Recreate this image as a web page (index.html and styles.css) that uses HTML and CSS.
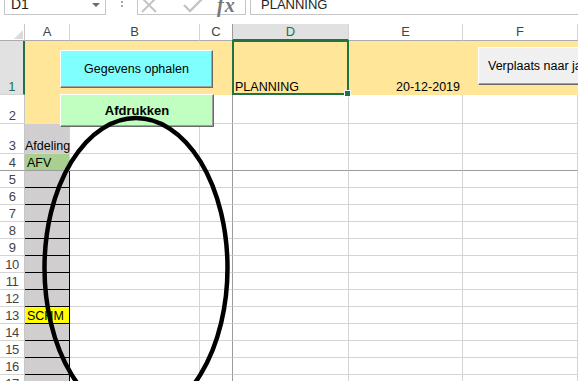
FILE: index.html
```html
<!DOCTYPE html>
<html lang="nl">
<head>
  <meta charset="UTF-8" />
  <title>Planning</title>
  <link rel="stylesheet" href="styles.css">
</head>
<body>

  <div class="formula-bar">
    <div class="name-box">D1<span class="arrow"></span></div>
    <div class="grip"><span></span></div>
    <div class="fx-box">
      <svg class="ico-x" width="20" height="16" viewBox="0 0 20 16">
        <path d="M2 1 L16 15 M16 1 L2 15" stroke="#c4c4c4" stroke-width="2" fill="none"/>
      </svg>
      <svg class="ico-ok" width="20" height="16" viewBox="0 0 20 16">
        <path d="M1 8 L7 14 L19 2" stroke="#c4c4c4" stroke-width="2.4" fill="none"/>
      </svg>
      <span class="ico-fx">fx</span>
    </div>
    <div class="formula">PLANNING</div>
  </div>

  <div class="sheet">
    <div class="row hdr">
      <div class="corner"><span></span></div>
      <div>A</div><div>B</div><div class="fz">C</div><div class="on">D</div><div>E</div><div>F</div>
    </div>
    <div class="row r1">
      <div class="rh on">1</div>
      <div class="y"></div><div class="y"></div><div class="y fz"></div>
      <div class="y">PLANNING</div><div class="y right">20-12-2019</div><div class="y"></div>
    </div>
    <div class="row r2">
      <div class="rh">2</div>
      <div class="y"></div><div class="y"></div><div class="fz"></div><div></div><div></div><div></div>
    </div>
    <div class="row r3">
      <div class="rh">3</div>
      <div class="g tight">Afdeling</div><div></div><div class="fz"></div><div></div><div></div><div></div>
    </div>
    <div class="row frz">
      <div class="rh">4</div>
      <div class="green">AFV</div><div></div><div class="fz"></div><div></div><div></div><div></div>
    </div>
    <div class="row"><div class="rh">5</div><div class="g box"></div><div></div><div class="fz"></div><div></div><div></div><div></div></div>
    <div class="row"><div class="rh">6</div><div class="g box"></div><div></div><div class="fz"></div><div></div><div></div><div></div></div>
    <div class="row"><div class="rh">7</div><div class="g box"></div><div></div><div class="fz"></div><div></div><div></div><div></div></div>
    <div class="row"><div class="rh">8</div><div class="g box"></div><div></div><div class="fz"></div><div></div><div></div><div></div></div>
    <div class="row"><div class="rh">9</div><div class="g box"></div><div></div><div class="fz"></div><div></div><div></div><div></div></div>
    <div class="row"><div class="rh">10</div><div class="g box"></div><div></div><div class="fz"></div><div></div><div></div><div></div></div>
    <div class="row"><div class="rh">11</div><div class="g box"></div><div></div><div class="fz"></div><div></div><div></div><div></div></div>
    <div class="row"><div class="rh">12</div><div class="g box"></div><div></div><div class="fz"></div><div></div><div></div><div></div></div>
    <div class="row"><div class="rh">13</div><div class="yel box">SCHM</div><div></div><div class="fz"></div><div></div><div></div><div></div></div>
    <div class="row"><div class="rh">14</div><div class="g box"></div><div></div><div class="fz"></div><div></div><div></div><div></div></div>
    <div class="row"><div class="rh">15</div><div class="g box"></div><div></div><div class="fz"></div><div></div><div></div><div></div></div>
    <div class="row"><div class="rh">16</div><div class="g box"></div><div></div><div class="fz"></div><div></div><div></div><div></div></div>
    <div class="row"><div class="rh">17</div><div class="g box"></div><div></div><div class="fz"></div><div></div><div></div><div></div></div>
  </div>

  <div class="sel"></div>

  <div class="btn btn-fetch">Gegevens ophalen</div>
  <div class="btn btn-print">Afdrukken</div>
  <div class="btn btn-move">Verplaats naar jaar</div>

  <svg class="lasso" width="578" height="381" viewBox="0 0 578 381">
    <ellipse cx="136" cy="268" rx="91.5" ry="150" fill="none" stroke="#000" stroke-width="4.5"/>
  </svg>

</body>
</html>
```

FILE: styles.css
```css
* {
  box-sizing: border-box;
  margin: 0;
  padding: 0;
}

body {
  position: relative;
  width: 578px;
  height: 381px;
  overflow: hidden;
  background: #fff;
  font-family: 'Liberation Sans', Arial, sans-serif;
  color: #000;
}

/* formula bar */
.formula-bar {
  height: 24px;
  display: flex;
  align-items: flex-start;
}

.formula-bar > div {
  margin-top: -8px;
  height: 23px;
  background: #fff;
}

.name-box {
  margin-left: 4px;
  width: 102px;
  border: 1px solid #c6c6c6;
  display: flex;
  align-items: flex-start;
  padding: 4px 0 0 6px;
  font-size: 14px;
  line-height: 15px;
  color: #222;
}

.name-box .arrow {
  margin: 6px 5px 0 auto;
  width: 0;
  height: 0;
  border-left: 4px solid transparent;
  border-right: 4px solid transparent;
  border-top: 4px solid #6a6a6a;
}

.grip {
  width: 31px;
  display: flex;
  justify-content: center;
}

.grip span {
  margin-top: 13px;
  width: 2px;
  height: 2px;
  background: #a6a6a6;
  box-shadow: 0 -4px #a6a6a6, 0 -8px #a6a6a6;
}

.fx-box {
  width: 109px;
  border: 1px solid #c6c6c6;
  display: flex;
  align-items: flex-start;
}

.ico-x {
  margin: 4px 0 0 2px;
}

.ico-ok {
  margin: 4px 0 0 23px;
}

.ico-fx {
  margin: 1px 0 0 14px;
  font-family: 'Liberation Serif', serif;
  font-style: italic;
  font-weight: bold;
  font-size: 20px;
  line-height: 22px;
  letter-spacing: 1px;
  color: #777;
}

.formula {
  flex: 1;
  margin-left: 4px;
  border: 1px solid #c6c6c6;
  border-right: none;
  padding: 4px 0 0 10px;
  font-size: 13px;
  line-height: 15px;
  color: #222;
}

/* grid */
.row {
  display: grid;
  grid-template-columns: 25px 45px 130px 33px 116px 114px 1fr;
  height: 17px;
}

.row > div {
  display: flex;
  align-items: flex-end;
  padding: 0 2px;
  border-right: 1px solid #d4d4d4;
  border-bottom: 1px solid #d4d4d4;
  font-size: 12.5px;
  line-height: 14px;
  white-space: nowrap;
}

.row.r1 { height: 54px; }
.row.r2 { height: 29px; }
.row.r3 { height: 30px; }

.row > .rh {
  justify-content: center;
  font-size: 13px;
  letter-spacing: -0.5px;
  color: #444;
  border-right-color: #c6c6c6;
}

.hdr > div {
  align-items: center;
  justify-content: center;
  font-size: 13px;
  color: #444;
  border-bottom-color: #ababab;
}

.hdr > .corner {
  justify-content: flex-end;
  align-items: flex-end;
  padding: 0 1px 1px 0;
  border-right-color: #c6c6c6;
}

.corner span {
  width: 0;
  height: 0;
  border-left: 9px solid transparent;
  border-bottom: 9px solid #dadada;
}

.row > .on {
  background: #e1e1e1;
  color: #217346;
}

.hdr > .on {
  border-bottom: 2px solid #217346;
}

.row > .rh.on {
  border-right: 2px solid #217346;
}

/* frozen panes */
.row > .fz { border-right-color: #9b9b9b; }
.frz > div { border-bottom-color: #9b9b9b !important; }

/* cell fills */
.row > .y {
  background: #ffe699;
  border-color: #ffe699;
}

.row > .g { background: #d0cece; }
.row > .green { background: #a9d08e; }
.row > .yel { background: #ffff00; }

.row > .box {
  border-right-color: #000;
  border-bottom-color: #000;
}

.row > .tight { padding-left: 0; }
.row > .right { justify-content: flex-end; }

/* selection */
.sel {
  position: absolute;
  left: 232px;
  top: 40px;
  width: 117px;
  height: 55px;
  border: 2px solid #217346;
}

.sel::after {
  content: "";
  position: absolute;
  right: -3px;
  bottom: -3px;
  width: 5px;
  height: 5px;
  background: #217346;
  box-shadow: 0 0 0 1px #fff;
}

/* form buttons */
.btn {
  position: absolute;
  display: flex;
  align-items: center;
  justify-content: center;
  font-size: 12.5px;
  white-space: nowrap;
  border: 1px solid;
  border-color: #fff #696969 #696969 #fff;
  box-shadow: inset -1px -1px #a0a0a0;
}

.btn-fetch {
  left: 60px;
  top: 50px;
  width: 153px;
  height: 38px;
  background: #80ffff;
}

.btn-print {
  left: 60px;
  top: 94px;
  width: 154px;
  height: 33px;
  background: #c0ffc0;
  font-weight: bold;
  font-size: 13px;
}

.btn-move {
  left: 478px;
  top: 47px;
  width: 150px;
  height: 38px;
  background: #f0f0f0;
  justify-content: flex-start;
  padding-left: 9px;
}

.lasso {
  position: absolute;
  left: 0;
  top: 0;
  pointer-events: none;
}
```
